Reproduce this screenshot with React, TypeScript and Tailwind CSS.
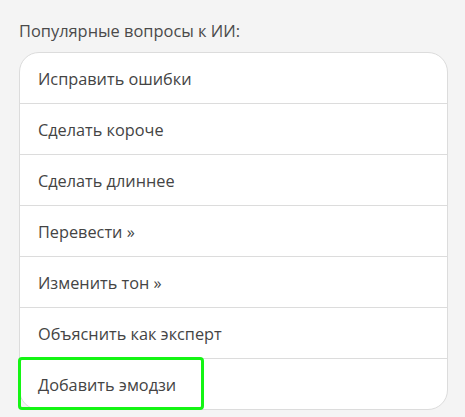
import React from "react";

const items = [
  "Исправить ошибки",
  "Сделать короче",
  "Сделать длиннее",
  "Перевести »",
  "Изменить тон »",
  "Объяснить как эксперт",
  "Добавить эмодзи",
];

export default function App() {
  return (
    <div
      className="w-[465px] h-[417px] bg-[#f4f4f4] pt-[19px] pl-[19px] overflow-hidden"
      style={{ fontFamily: '"Open Sans", "Noto Sans", sans-serif' }}
    >
      <div className="text-[16.4px] leading-[23px] text-[#4a4a4a]">Популярные вопросы к ИИ:</div>
      <div className="mt-[10px] w-[429px] bg-white border border-[#dcdcdc] rounded-[20px]">
        {items.map((t, i) => (
          <div
            key={t}
            className={
              "relative flex items-center pl-[18px] pt-[3px] text-[16.3px] text-[#444] " +
              (i < items.length - 1 ? "h-[51px] border-b border-[#dcdcdc]" : "h-[50px]")
            }
          >
            {i === items.length - 1 && (
              <div className="absolute left-[-2px] top-[-2px] w-[186px] h-[53px] border-[3px] border-[#14f514] rounded-[4px]" />
            )}
            <span>{t}</span>
          </div>
        ))}
      </div>
    </div>
  );
}
